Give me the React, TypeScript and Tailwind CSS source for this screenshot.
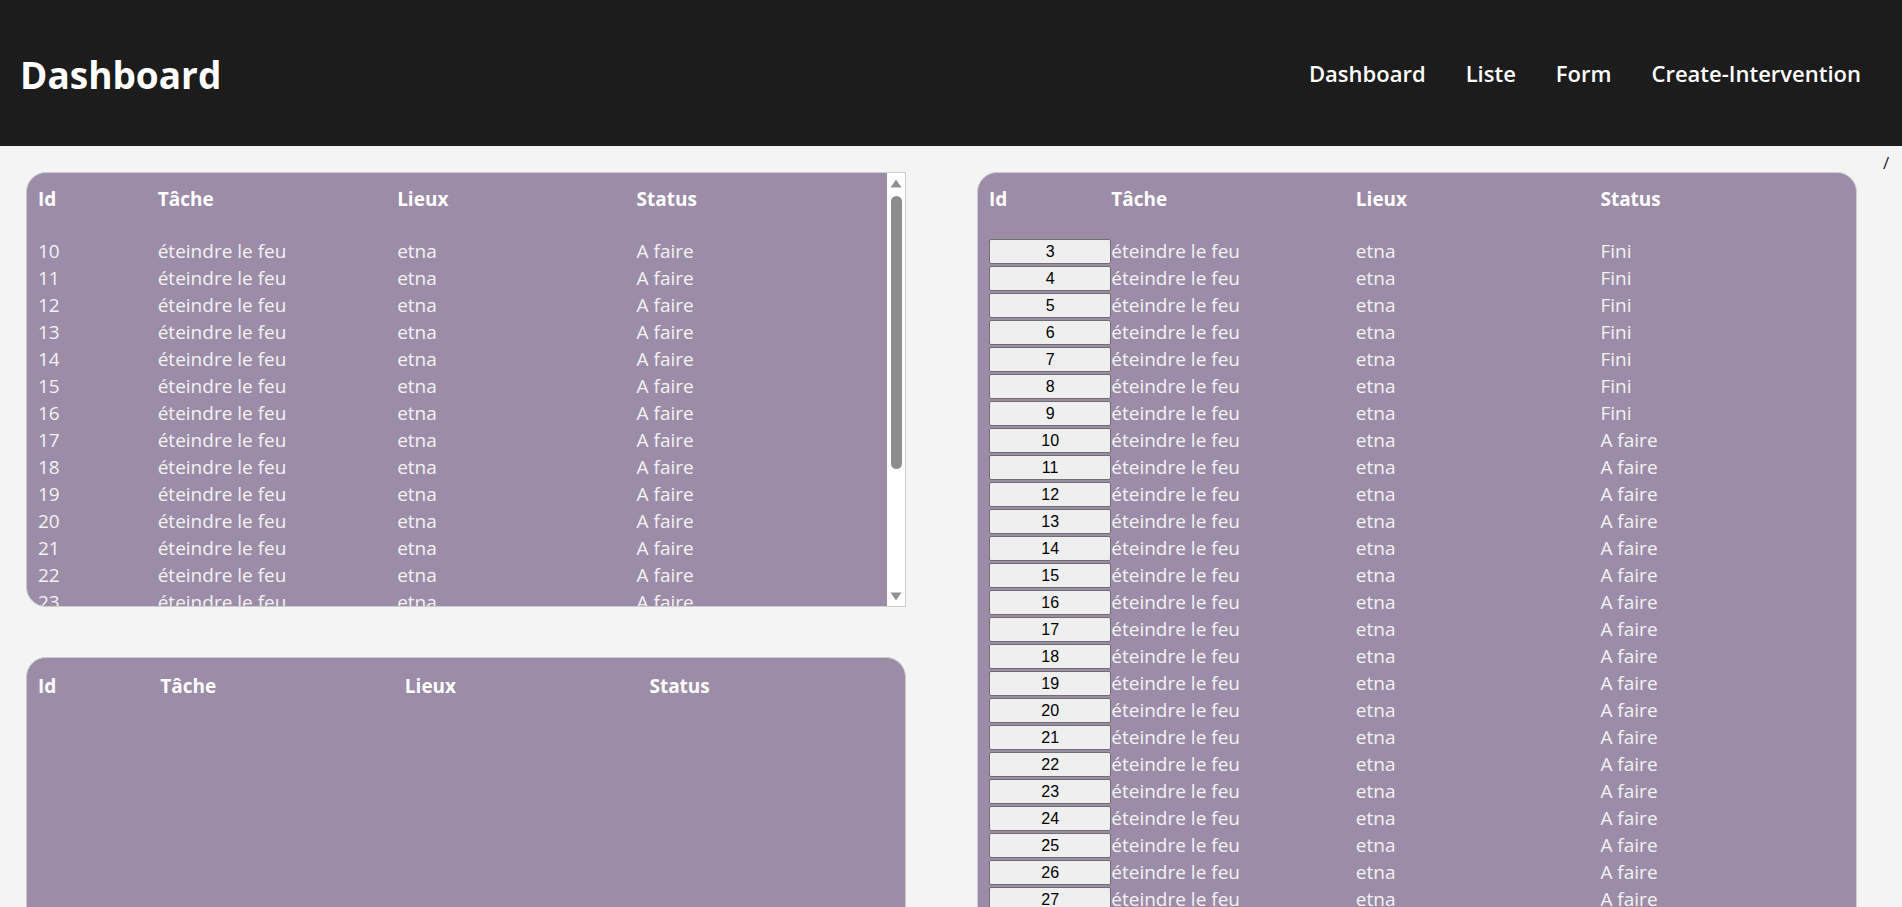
import React from 'react';

type Row = { id: number; tache: string; lieux: string; status: string };

const leftRows: Row[] = Array.from({ length: 21 }, (_, i) => ({
  id: 10 + i,
  tache: 'éteindre le feu',
  lieux: 'etna',
  status: 'A faire',
}));

const rightRows: Row[] = Array.from({ length: 38 }, (_, i) => ({
  id: 3 + i,
  tache: 'éteindre le feu',
  lieux: 'etna',
  status: 3 + i < 10 ? 'Fini' : 'A faire',
}));

const cols = 'grid grid-cols-[1fr_2fr_2fr_2fr]';

function HeaderRow({ className = '' }: { className?: string }) {
  return (
    <div className={`${cols} font-bold text-white leading-[27px] ${className}`}>
      <span>Id</span>
      <span>Tâche</span>
      <span>Lieux</span>
      <span>Status</span>
    </div>
  );
}

function TextRow({ row }: { row: Row }) {
  return (
    <div className={`${cols} leading-[27px] text-[#f3f3f3]`}>
      <span>{row.id}</span>
      <span>{row.tache}</span>
      <span>{row.lieux}</span>
      <span>{row.status}</span>
    </div>
  );
}

function BoxRow({ row }: { row: Row }) {
  return (
    <div className={`${cols} h-[27px] leading-[27px] text-[#f3f3f3]`}>
      <span className="mt-[1px] flex h-[25px] items-center justify-center rounded-[2px] border border-[#6f6f6f] bg-[#efefef] font-['Liberation_Sans',Arial,sans-serif] text-[16px] leading-none text-black">
        {row.id}
      </span>
      <span>{row.tache}</span>
      <span>{row.lieux}</span>
      <span>{row.status}</span>
    </div>
  );
}

// scrollbar look-alike of the reference (white track, arrows, grey thumb)
function ScrollTrack() {
  return (
    <div className="flex w-[18px] shrink-0 flex-col items-center bg-white">
      <svg width="12" height="9" viewBox="0 0 12 9" className="mt-[6px]">
        <path d="M6 0.5 L11.5 8.5 L0.5 8.5 Z" fill="#919191" />
      </svg>
      <div className="mt-[8px] h-[273px] w-[11px] rounded-full bg-[#8c8c8c]" />
      <div className="flex-1" />
      <svg width="12" height="9" viewBox="0 0 12 9" className="mb-[5px]">
        <path d="M0.5 0.5 L11.5 0.5 L6 8.5 Z" fill="#919191" />
      </svg>
    </div>
  );
}

export default function App() {
  return (
    <div className="min-h-screen bg-[#f4f4f4] font-['Open_Sans',sans-serif]">
      {/* top bar */}
      <header className="flex h-[146px] items-center justify-between bg-[#1c1c1c] pl-[20px] pr-[41px] text-white">
        <h1 className="mt-[4px] text-[37px] font-bold">Dashboard</h1>
        <nav className="flex items-center gap-[40px] text-[22px] font-semibold">
          <a href="#">Dashboard</a>
          <a href="#">Liste</a>
          <a href="#">Form</a>
          <a href="#">Create-Intervention</a>
        </nav>
      </header>

      <main className="flex items-start pl-[26px] text-[19px]">
        <div className="mt-[26px] flex w-[880px] flex-col gap-[50px]">
          <section className="flex h-[435px] overflow-hidden rounded-l-[20px] border border-[#cccccc] bg-[#9d8ca8]">
            <div className="min-w-0 flex-1 overflow-y-auto px-[11px] pb-[12px] pt-[13px] [scrollbar-width:none]">
              <HeaderRow className="mb-[25px]" />
              {leftRows.map((r) => (
                <TextRow key={r.id} row={r} />
              ))}
            </div>
            <ScrollTrack />
          </section>

          <section className="h-[440px] rounded-[20px] border border-[#cccccc] bg-[#9d8ca8] px-[11px] pt-[15px]">
            <HeaderRow />
          </section>
        </div>

        <section className="ml-[71px] mt-[26px] w-[880px] rounded-[20px] border border-[#cccccc] bg-[#9d8ca8] px-[11px] pb-[20px] pt-[13px]">
          <HeaderRow className="mb-[25px]" />
          {rightRows.map((r) => (
            <BoxRow key={r.id} row={r} />
          ))}
        </section>

        <span className="ml-[26px] mt-[6px] text-[17px] leading-[22px] text-[#222]">/</span>
      </main>
    </div>
  );
}
